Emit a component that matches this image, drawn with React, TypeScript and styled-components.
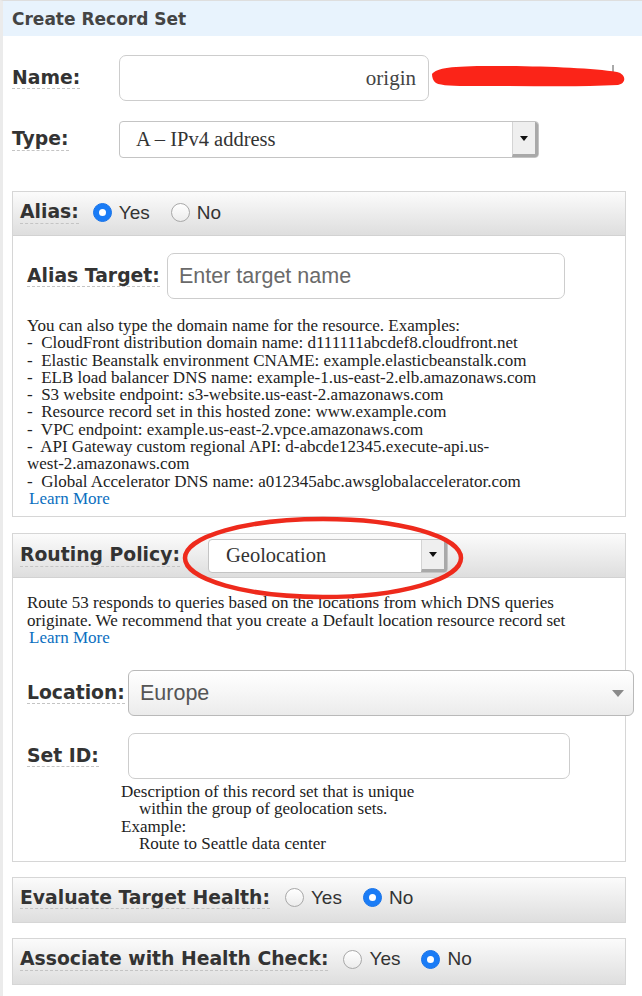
import React from "react";
import styled, { createGlobalStyle } from "styled-components";

const Global = createGlobalStyle`
  html, body { margin: 0; padding: 0; background: #fff; }
  body { font-family: "Liberation Serif", "Times New Roman", serif; color: #222; }
`;

const Page = styled.div`
  position: relative;
  width: 642px;
  min-height: 996px;
  box-sizing: border-box;
  border-left: 3px solid #ebebeb;
  border-top: 1px solid #dedede;
  overflow: hidden;
`;

const Header = styled.div`
  height: 35px;
  display: flex;
  align-items: center;
  padding-left: 9px;
  background: #e8f3fd;
  font-family: "DejaVu Sans", sans-serif;
  font-weight: bold;
  font-size: 17px;
  color: #444;
`;

const Content = styled.div`
  padding: 19px 16px 0 9px;
  display: flex;
  flex-direction: column;
`;

const Row = styled.div<{ $mt?: number }>`
  display: flex;
  align-items: center;
  margin-top: ${(p) => p.$mt ?? 0}px;
`;

const LabelCell = styled.div<{ $w?: number }>`
  flex: 0 0 ${(p) => (p.$w ? `${p.$w}px` : "auto")};
  display: flex;
`;

const Label = styled.span`
  font-family: "DejaVu Sans", sans-serif;
  font-weight: bold;
  font-size: 18.8px;
  color: #333;
  line-height: 1.15;
  border-bottom: 1px dashed #c4c4c4;
  white-space: nowrap;
`;

const TextBox = styled.div<{ $w: number; $h: number; $align?: string }>`
  box-sizing: border-box;
  flex: 0 0 auto;
  width: ${(p) => p.$w}px;
  height: ${(p) => p.$h}px;
  border: 1px solid #cdcdcd;
  border-radius: 7px;
  background: #fff;
  display: flex;
  align-items: center;
  justify-content: ${(p) => p.$align ?? "flex-start"};
  padding: 0 12px 0 11px;
  font-family: "Liberation Serif", serif;
  font-size: 21px;
  color: #444;
`;

const Placeholder = styled.span`
  font-family: "Liberation Sans", Arial, sans-serif;
  font-size: 21.5px;
  color: #6a6a6a;
`;

const SelectBox = styled.div<{ $w: number; $h: number }>`
  box-sizing: border-box;
  flex: 0 0 auto;
  width: ${(p) => p.$w}px;
  height: ${(p) => p.$h}px;
  border: 1px solid #c4c4c4;
  border-radius: 4px;
  background: #fff;
  display: flex;
  align-items: stretch;
  overflow: hidden;
`;

const SelectText = styled.div<{ $pl: number }>`
  flex: 1;
  display: flex;
  align-items: center;
  padding-left: ${(p) => p.$pl}px;
  font-family: "Liberation Serif", serif;
  font-size: 20.5px;
  color: #333;
`;

const SelectButton = styled.div`
  flex: 0 0 26px;
  display: flex;
  align-items: center;
  justify-content: center;
  background: #efefef;
  border-left: 1px solid #d4d4d4;
  border-right: 3px solid #a9a9a9;
  border-bottom: 3px solid #a9a9a9;
  box-sizing: border-box;
`;

const Arrow = styled.span<{ $color?: string; $size?: number }>`
  width: 0;
  height: 0;
  border-left: ${(p) => p.$size ?? 4}px solid transparent;
  border-right: ${(p) => p.$size ?? 4}px solid transparent;
  border-top: ${(p) => (p.$size ?? 4) + 1}px solid ${(p) => p.$color ?? "#111"};
`;

const Panel = styled.div<{ $mt: number }>`
  margin-top: ${(p) => p.$mt}px;
  border: 1px solid #d6d6d6;
  position: relative;
`;

const PanelHeader = styled.div<{ $h: number; $bottom?: boolean; $lift?: number }>`
  height: ${(p) => p.$h}px;
  display: flex;
  align-items: center;
  padding: 0 0 ${(p) => p.$lift ?? 0}px 7px;
  background: linear-gradient(#fbfbfb, #dedede);
  border-bottom: ${(p) => (p.$bottom ? "1px solid #d2d2d2" : "none")};
`;

const PanelBody = styled.div<{ $pt: number; $pb: number }>`
  padding: ${(p) => p.$pt}px 0 ${(p) => p.$pb}px 14px;
`;

const RadioGroup = styled.div<{ $ml: number }>`
  display: flex;
  align-items: center;
  margin-left: ${(p) => p.$ml}px;
`;

const RadioItem = styled.div`
  display: flex;
  align-items: center;
  margin-right: 21px;
`;

const RadioCircle = styled.span<{ $on?: boolean }>`
  box-sizing: border-box;
  width: 19px;
  height: 19px;
  border-radius: 50%;
  display: inline-flex;
  align-items: center;
  justify-content: center;
  background: ${(p) => (p.$on ? "#1a7cf6" : "linear-gradient(#ffffff, #ececec)")};
  border: 1px solid ${(p) => (p.$on ? "#1a74e8" : "#a8a8a8")};
  &::after {
    content: "";
    display: ${(p) => (p.$on ? "block" : "none")};
    width: 7px;
    height: 7px;
    border-radius: 50%;
    background: #fff;
  }
`;

const RadioText = styled.span`
  margin-left: 7px;
  font-family: "Liberation Sans", Arial, sans-serif;
  font-size: 19px;
  color: #333;
`;

const HelpText = styled.div<{ $mt: number; $ml?: number }>`
  margin-top: ${(p) => p.$mt}px;
  margin-left: ${(p) => p.$ml ?? 0}px;
  font-family: "Liberation Serif", serif;
  font-size: 17px;
  line-height: 17.3px;
  color: #222;
`;

const Line = styled.div<{ $indent?: number }>`
  padding-left: ${(p) => p.$indent ?? 0}px;
  white-space: nowrap;
`;

const Link = styled.a`
  color: #0b6fbf;
  text-decoration: none;
  padding-left: 2px;
`;

const GradSelect = styled.div<{ $w: number; $h: number }>`
  box-sizing: border-box;
  flex: 0 0 auto;
  width: ${(p) => p.$w}px;
  height: ${(p) => p.$h}px;
  border: 1px solid #b9b9b9;
  border-radius: 6px;
  background: linear-gradient(#ffffff, #f7f7f7 45%, #ebebeb);
  display: flex;
  align-items: center;
  justify-content: space-between;
  padding: 0 9px 0 11px;
  font-family: "Liberation Sans", Arial, sans-serif;
  font-size: 21.5px;
  color: #555;
`;

const Scribble = styled.svg`
  margin-left: 2px;
  margin-top: -5px;
  flex: 0 0 auto;
`;

const Ellipse = styled.svg`
  position: absolute;
  left: 0;
  top: 0;
  pointer-events: none;
`;

function Radio({ label, on }: { label: string; on?: boolean }) {
  return (
    <RadioItem>
      <RadioCircle $on={on} />
      <RadioText>{label}</RadioText>
    </RadioItem>
  );
}

export default function App() {
  return (
    <>
      <Global />
      <Page>
        <Header>Create Record Set</Header>
        <Content>
          <Row>
            <LabelCell $w={107}>
              <Label>Name:</Label>
            </LabelCell>
            <TextBox $w={310} $h={46} $align="flex-end">
              origin
            </TextBox>
            <Scribble width="196" height="26" viewBox="0 0 196 26">
              <line x1="182" y1="2" x2="182" y2="9" stroke="#555" strokeWidth="1" />
              <path
                d="M1 11 C 6 5, 20 3, 60 3 C 110 3, 160 5, 186 9 C 195 11, 196 20, 187 22 C 150 24, 110 23, 70 23 C 40 23, 12 24, 5 20 C 2 18, 1 14, 1 11 Z"
                fill="#fb2418"
              />
            </Scribble>
          </Row>
          <Row $mt={20}>
            <LabelCell $w={107}>
              <Label>Type:</Label>
            </LabelCell>
            <SelectBox $w={420} $h={37}>
              <SelectText $pl={16}>A – IPv4 address</SelectText>
              <SelectButton>
                <Arrow />
              </SelectButton>
            </SelectBox>
          </Row>

          <Panel $mt={33}>
            <PanelHeader $h={41} $bottom $lift={2}>
              <Label>Alias:</Label>
              <RadioGroup $ml={14}>
                <Radio label="Yes" on />
                <Radio label="No" />
              </RadioGroup>
            </PanelHeader>
            <PanelBody $pt={17} $pb={9}>
              <Row>
                <LabelCell $w={140}>
                  <Label>Alias Target:</Label>
                </LabelCell>
                <TextBox $w={398} $h={46}>
                  <Placeholder>Enter target name</Placeholder>
                </TextBox>
              </Row>
              <HelpText $mt={18}>
                <Line>You can also type the domain name for the resource. Examples:</Line>
                <Line>-&nbsp; CloudFront distribution domain name: d111111abcdef8.cloudfront.net</Line>
                <Line>-&nbsp; Elastic Beanstalk environment CNAME: example.elasticbeanstalk.com</Line>
                <Line>-&nbsp; ELB load balancer DNS name: example-1.us-east-2.elb.amazonaws.com</Line>
                <Line>-&nbsp; S3 website endpoint: s3-website.us-east-2.amazonaws.com</Line>
                <Line>-&nbsp; Resource record set in this hosted zone: www.example.com</Line>
                <Line>-&nbsp; VPC endpoint: example.us-east-2.vpce.amazonaws.com</Line>
                <Line>-&nbsp; API Gateway custom regional API: d-abcde12345.execute-api.us-</Line>
                <Line>west-2.amazonaws.com</Line>
                <Line>-&nbsp; Global Accelerator DNS name: a012345abc.awsglobalaccelerator.com</Line>
                <Line>
                  <Link>Learn More</Link>
                </Line>
              </HelpText>
            </PanelBody>
          </Panel>

          <Panel $mt={16}>
            <PanelHeader $h={43} $bottom>
              <LabelCell $w={188}>
                <Label>Routing Policy:</Label>
              </LabelCell>
              <SelectBox $w={240} $h={34}>
                <SelectText $pl={17}>Geolocation</SelectText>
                <SelectButton>
                  <Arrow />
                </SelectButton>
              </SelectBox>
            </PanelHeader>
            <PanelBody $pt={16} $pb={9}>
              <HelpText $mt={0}>
                <Line>Route 53 responds to queries based on the locations from which DNS queries</Line>
                <Line>originate. We recommend that you create a Default location resource record set</Line>
                <Line>
                  <Link>Learn More</Link>
                </Line>
              </HelpText>
              <Row $mt={24}>
                <LabelCell $w={101}>
                  <Label>Location:</Label>
                </LabelCell>
                <GradSelect $w={506} $h={46}>
                  <span>Europe</span>
                  <Arrow $color="#8a8a8a" $size={6} />
                </GradSelect>
              </Row>
              <Row $mt={17}>
                <LabelCell $w={101}>
                  <Label>Set ID:</Label>
                </LabelCell>
                <TextBox $w={442} $h={46} />
              </Row>
              <HelpText $mt={4} $ml={94}>
                <Line>Description of this record set that is unique</Line>
                <Line $indent={18}>within the group of geolocation sets.</Line>
                <Line>Example:</Line>
                <Line $indent={18}>Route to Seattle data center</Line>
              </HelpText>
            </PanelBody>
          </Panel>

          <Panel $mt={15}>
            <PanelHeader $h={39} $lift={5}>
              <Label>Evaluate Target Health:</Label>
              <RadioGroup $ml={15}>
                <Radio label="Yes" />
                <Radio label="No" on />
              </RadioGroup>
            </PanelHeader>
          </Panel>

          <Panel $mt={15}>
            <PanelHeader $h={40} $lift={5}>
              <Label>Associate with Health Check:</Label>
              <RadioGroup $ml={15}>
                <Radio label="Yes" />
                <Radio label="No" on />
              </RadioGroup>
            </PanelHeader>
          </Panel>
        </Content>
        <Ellipse width="642" height="996" viewBox="0 0 642 996">
          <ellipse cx="320" cy="557" rx="138" ry="39" fill="none" stroke="#ee2a1c" strokeWidth="4.5" />
        </Ellipse>
      </Page>
    </>
  );
}
